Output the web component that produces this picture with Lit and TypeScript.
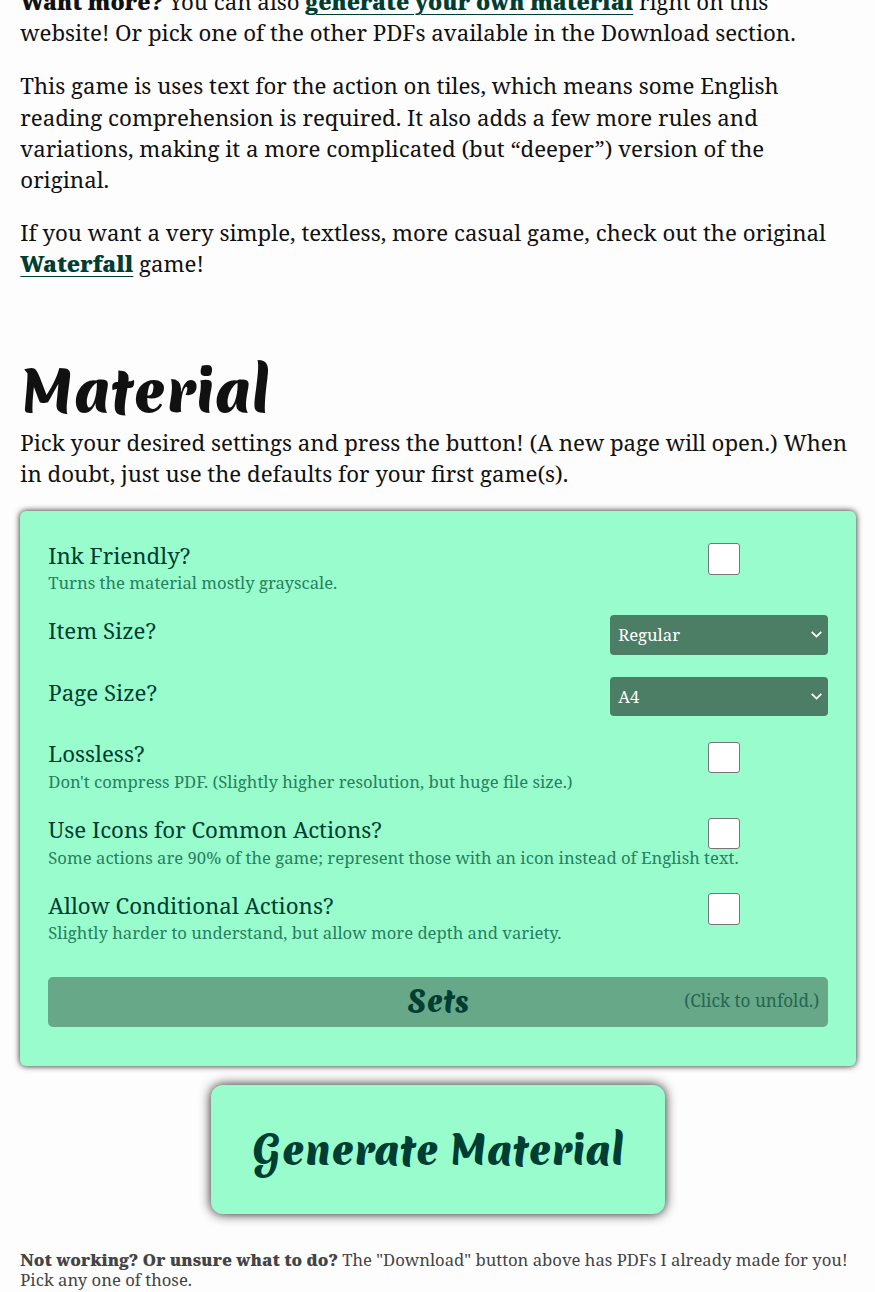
import { LitElement, html, css, nothing } from "lit";
import { customElement, property, state } from "lit/decorators.js";

@customElement("setting-row")
class SettingRow extends LitElement {
  @property() label = "";
  @property() remark = "";
  @property({ type: Array }) options: string[] = [];

  static styles = css`
    :host {
      display: grid;
      grid-template-columns: minmax(0, 1fr) 218px;
      align-items: start;
      color: #003d33;
    }
    .label { line-height: 1.4; }
    .remark {
      margin-top: 2.4px;
      font-size: 0.75em;
      line-height: 1.19;
      white-space: nowrap;
      color: #26805f;
    }
    .control { display: flex; }
    .check {
      appearance: none;
      box-sizing: border-box;
      width: 31.4px;
      height: 31.2px;
      margin: 3.8px 0 0 98px;
      border: 1px solid #767676;
      border-radius: 3px;
      background: #fff;
    }
    .select {
      display: flex;
      flex: 1;
      align-items: center;
      justify-content: space-between;
      box-sizing: border-box;
      height: 39.4px;
      padding: 0 6px 0 8px;
      border-radius: 4px;
      background: #4c7d65;
      color: #fff;
      font-size: 0.75em;
    }
    .chevron { display: block; width: 11px; height: 7px; }
  `;

  render() {
    return html`
      <div>
        <div class="label">${this.label}</div>
        ${this.remark ? html`<div class="remark">${this.remark}</div>` : nothing}
      </div>
      <div class="control">
        ${this.options.length
          ? html`<div class="select" role="combobox">
              <span>${this.options[0]}</span>
              <svg class="chevron" viewBox="0 0 11 7" fill="none" stroke="#fff" stroke-width="1.8">
                <path d="M0.7 0.8L5.5 5.6L10.3 0.8" />
              </svg>
            </div>`
          : html`<input class="check" type="checkbox" />`}
      </div>
    `;
  }
}

@customElement("app-root")
class AppRoot extends LitElement {
  @state() private settings = [
    { label: "Ink Friendly?", remark: "Turns the material mostly grayscale.", options: [] },
    { label: "Item Size?", remark: "", options: ["Regular"] },
    { label: "Page Size?", remark: "", options: ["A4"] },
    { label: "Lossless?", remark: "Don't compress PDF. (Slightly higher resolution, but huge file size.)", options: [] },
    { label: "Use Icons for Common Actions?", remark: "Some actions are 90% of the game; represent those with an icon instead of English text.", options: [] },
    { label: "Allow Conditional Actions?", remark: "Slightly harder to understand, but allow more depth and variety.", options: [] },
  ];

  static styles = css`
    :host {
      display: block;
      box-sizing: border-box;
      height: 1292px;
      overflow: hidden;
      padding: 0 18.8px 0 20.3px;
      background: #fdfdfd;
      color: #111;
      font-family: "Noto Serif", "DejaVu Serif Condensed", serif;
      font-size: 22.25px;
      line-height: 1.4;
    }
    p { margin: 0 0 1em; }
    .intro { margin-top: -14.15px; }
    strong, .link { font-weight: 900; }
    .link {
      color: #003d33;
      text-decoration: underline;
      text-decoration-thickness: 1px;
      text-underline-offset: 4px;
    }
    .title, .fold-title, .generate {
      font-family: "Merienda", cursive;
      font-weight: 900;
    }
    .title { margin: 76.6px 0 0; font-size: 2.5em; line-height: 1.268; }
    .settings {
      display: flex;
      flex-direction: column;
      box-sizing: border-box;
      height: 555px;
      padding: 28.4px 28px 0;
      gap: 22.25px;
      border-radius: 6px;
      background: #99fccc;
      box-shadow: 0 0 6px rgba(0, 0, 0, 0.9);
    }
    .fold {
      display: grid;
      grid-template-columns: 1fr auto 1fr;
      align-items: center;
      box-sizing: border-box;
      height: 50px;
      margin-top: 11.4px;
      padding: 0 9px;
      border-radius: 5px;
      background: #66a888;
      color: #003d33;
    }
    .fold-title { grid-column: 2; font-size: 1.25em; line-height: 1; }
    .fold-hint { justify-self: end; padding-bottom: 2px; font-size: 0.772em; color: #266650; }
    .generate {
      display: block;
      box-sizing: border-box;
      width: 454px;
      height: 129px;
      margin: 19px auto 0;
      padding: 1px 0 0;
      border: 0;
      border-radius: 12px;
      background: #99fccc;
      box-shadow: 0 0 12px rgba(0, 0, 0, 0.9);
      color: #003d33;
      font-size: 1.75em;
    }
    .help { margin: 36px 0 0; font-size: 0.75em; line-height: 1.2; color: #444; }
  `;

  render() {
    return html`
      <p class="intro">
        <strong>Want more?</strong> You can also <a class="link">generate your own material</a> right on this website! Or pick one of the other PDFs available in the Download section.
      </p>
      <p>
        This game is uses text for the action on tiles, which means some English reading comprehension is required. It also adds a few more rules and variations, making it a more complicated (but “deeper”) version of the original.
      </p>
      <p>
        If you want a very simple, textless, more casual game, check out the original <a class="link">Waterfall</a> game!
      </p>
      <h1 class="title">Material</h1>
      <p>
        Pick your desired settings and press the button! (A new page will open.) When in doubt, just use the defaults for your first game(s).
      </p>
      <section class="settings">
        ${this.settings.map(
          (s) => html`<setting-row .label=${s.label} .remark=${s.remark} .options=${s.options}></setting-row>`
        )}
        <div class="fold">
          <span class="fold-title">Sets</span>
          <span class="fold-hint">(Click to unfold.)</span>
        </div>
      </section>
      <button class="generate">Generate Material</button>
      <p class="help">
        <strong>Not working? Or unsure what to do?</strong> The "Download" button above has PDFs I already made for you! Pick any one of those.
      </p>
    `;
  }
}
